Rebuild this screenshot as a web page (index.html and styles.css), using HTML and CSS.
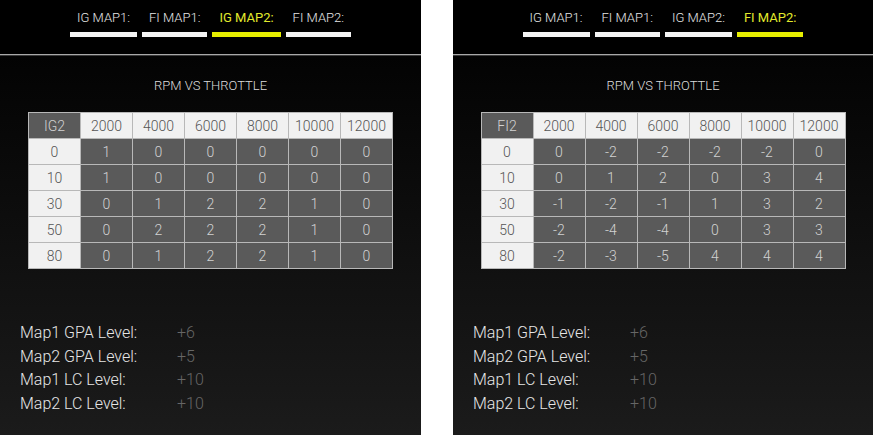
FILE: index.html
```html
<!DOCTYPE html>
<html lang="en">
<head>
  <meta charset="UTF-8" />
  <meta name="viewport" content="width=device-width, initial-scale=1.0"/>
  <title>Map Settings</title>
  <link rel="stylesheet" href="styles.css">
</head>
<body>

<div class="screens">

  <div class="panel">
    <div class="tabs">
      <div class="tab"><span>IG MAP1:</span><i></i></div>
      <div class="tab"><span>FI MAP1:</span><i></i></div>
      <div class="tab active"><span>IG MAP2:</span><i></i></div>
      <div class="tab"><span>FI MAP2:</span><i></i></div>
    </div>
    <div class="content">
      <div class="title">RPM VS THROTTLE</div>
      <table class="map">
        <tr><th class="corner">IG2</th><th>2000</th><th>4000</th><th>6000</th><th>8000</th><th>10000</th><th>12000</th></tr>
        <tr><th>0</th><td>1</td><td>0</td><td>0</td><td>0</td><td>0</td><td>0</td></tr>
        <tr><th>10</th><td>1</td><td>0</td><td>0</td><td>0</td><td>0</td><td>0</td></tr>
        <tr><th>30</th><td>0</td><td>1</td><td>2</td><td>2</td><td>1</td><td>0</td></tr>
        <tr><th>50</th><td>0</td><td>2</td><td>2</td><td>2</td><td>1</td><td>0</td></tr>
        <tr><th>80</th><td>0</td><td>1</td><td>2</td><td>2</td><td>1</td><td>0</td></tr>
      </table>
      <div class="levels">
        <span>Map1 GPA Level:</span><b>+6</b>
        <span>Map2 GPA Level:</span><b>+5</b>
        <span>Map1 LC Level:</span><b>+10</b>
        <span>Map2 LC Level:</span><b>+10</b>
      </div>
    </div>
  </div>

  <div class="panel">
    <div class="tabs">
      <div class="tab"><span>IG MAP1:</span><i></i></div>
      <div class="tab"><span>FI MAP1:</span><i></i></div>
      <div class="tab"><span>IG MAP2:</span><i></i></div>
      <div class="tab active"><span>FI MAP2:</span><i></i></div>
    </div>
    <div class="content">
      <div class="title">RPM VS THROTTLE</div>
      <table class="map">
        <tr><th class="corner">FI2</th><th>2000</th><th>4000</th><th>6000</th><th>8000</th><th>10000</th><th>12000</th></tr>
        <tr><th>0</th><td>0</td><td>-2</td><td>-2</td><td>-2</td><td>-2</td><td>0</td></tr>
        <tr><th>10</th><td>0</td><td>1</td><td>2</td><td>0</td><td>3</td><td>4</td></tr>
        <tr><th>30</th><td>-1</td><td>-2</td><td>-1</td><td>1</td><td>3</td><td>2</td></tr>
        <tr><th>50</th><td>-2</td><td>-4</td><td>-4</td><td>0</td><td>3</td><td>3</td></tr>
        <tr><th>80</th><td>-2</td><td>-3</td><td>-5</td><td>4</td><td>4</td><td>4</td></tr>
      </table>
      <div class="levels">
        <span>Map1 GPA Level:</span><b>+6</b>
        <span>Map2 GPA Level:</span><b>+5</b>
        <span>Map1 LC Level:</span><b>+10</b>
        <span>Map2 LC Level:</span><b>+10</b>
      </div>
    </div>
  </div>

</div>

</body>
</html>
```

FILE: styles.css
```css
body {
  margin: 0;
  padding: 0;
  background: #fff;
  font-family: Roboto, "Liberation Sans", sans-serif;
}
.screens {
  display: flex;
  gap: 32px;
  height: 435px;
}
.panel {
  width: 421px;
  display: flex;
  flex-direction: column;
  background: #000;
}
.panel + .panel {
  width: 420px;
}
.tabs {
  height: 55px;
  box-sizing: border-box;
  border-bottom: 1px solid #a8a8a8;
  display: flex;
  justify-content: center;
  gap: 5px;
  padding-top: 10px;
}
.tab {
  display: flex;
  flex-direction: column;
  align-items: center;
}
.tab span {
  color: #e6e6e6;
  font-size: 13px;
  font-weight: 300;
  line-height: 16px;
  padding: 0 7px;
}
.tab i {
  display: block;
  width: 100%;
  height: 5px;
  margin-top: 6px;
  background: #f4f4f4;
}
.tab.active span {
  color: #e2ea2c;
  font-weight: 400;
}
.tab.active i {
  background: #e6ee00;
}
.content {
  flex: 1;
  display: flex;
  flex-direction: column;
  align-items: center;
  border-top: 1px solid #3a3a3a;
  background: linear-gradient(#030303, #1b1b1b);
}
.title {
  color: #dcdcdc;
  font-size: 13px;
  font-weight: 300;
  margin-top: 22px;
  line-height: 16px;
}
.map {
  border-collapse: collapse;
  margin-top: 18px;
  font-size: 14px;
  font-weight: 300;
}
.map th, .map td {
  width: 51px;
  height: 25px;
  padding: 0;
  text-align: center;
  border: 1px solid #b8b8b8;
  font-weight: 300;
}
.map th {
  background: #f1f1f1;
  color: #555;
}
.map td, .map th.corner {
  background: #5a5a5a;
  color: #d2d2d2;
}
.levels {
  align-self: stretch;
  margin-top: auto;
  padding: 0 0 20px 20px;
  display: grid;
  grid-template-columns: 157px auto;
  line-height: 23.5px;
  font-size: 16px;
  font-weight: 300;
}
.levels span {
  color: #e6e6e6;
}
.levels b {
  color: #666;
  font-weight: 300;
}
```
